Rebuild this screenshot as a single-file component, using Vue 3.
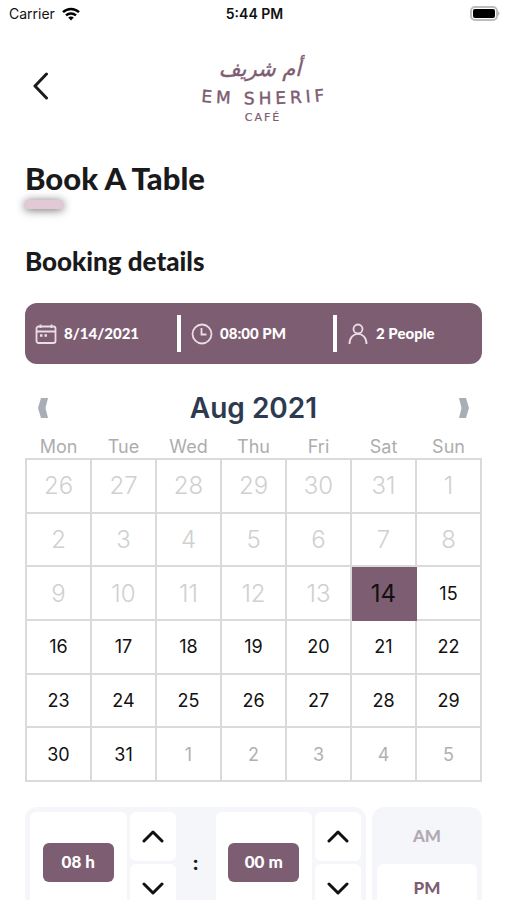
<script setup>
import { ref, computed } from 'vue'

const weekdays = ['Mon', 'Tue', 'Wed', 'Thu', 'Fri', 'Sat', 'Sun']
const hour = ref(8)
const minute = ref(0)
const period = ref('PM')
const selected = ref(14)

const cells = [
  ...[26, 27, 28, 29, 30, 31].map((n) => ({ n, kind: 'past' })),
  ...Array.from({ length: 31 }, (_, i) => ({ n: i + 1, kind: i < 13 ? 'past' : 'open' })),
  ...[1, 2, 3, 4, 5].map((n) => ({ n, kind: 'next' })),
]
const weeks = Array.from({ length: 6 }, (_, i) => cells.slice(i * 7, i * 7 + 7))

const pad = (n) => String(n).padStart(2, '0')
const timeLabel = computed(() => `${pad(hour.value)}:${pad(minute.value)} ${period.value}`)

function stepHour(d) {
  hour.value = ((hour.value - 1 + d + 12) % 12) + 1
}
function stepMinute(d) {
  minute.value = (minute.value + d * 15 + 60) % 60
}
</script>

<template>
  <div class="screen">
    <div class="status">
      <div class="carrier">
        <span>Carrier</span>
        <svg width="18" height="14" viewBox="0 0 18 14" fill="none" stroke="#000" stroke-width="2.4">
          <path d="M1 5.2C5.5 .9 12.500 .9 17 5.200" />
          <path d="M4 8.400C6.800 5.800 11.200 5.800 14 8.400" />
          <path d="M6.200 10.600C7.800 9.200 10.200 9.200 11.800 10.600L9 13.600Z" fill="#000" stroke="none" />
        </svg>
      </div>
      <span class="clock">5:44 PM</span>
      <svg class="battery" width="31" height="15" viewBox="0 0 31 15">
        <rect x="2" y="1" width="26" height="13" rx="4" fill="#fff" stroke="#bdbdbd" stroke-width="2" />
        <rect x="4" y="3" width="22" height="9" rx="2" fill="#000" />
        <path d="M29 5Q32 7.500 29 10Z" fill="#bdbdbd" />
      </svg>
    </div>

    <header class="top">
      <button class="back" aria-label="Back">
        <svg width="16" height="30" viewBox="0 0 16 30" fill="none" stroke="#1c1c1e" stroke-width="3" stroke-linecap="round" stroke-linejoin="round">
          <path d="M13.500 3L2 15L13.500 27" />
        </svg>
      </button>
      <svg class="logo" width="138" height="80" viewBox="0 0 138 80" fill="#7d5c70">
        <defs><path id="logo-arc" d="M0 55Q72 62 144 54" /></defs>
        <text class="logo-ar" x="70" y="30" text-anchor="middle" direction="rtl">أم شريف</text>
        <text class="logo-en" text-anchor="middle"><textPath href="#logo-arc" startOffset="52%">EM SHERIF</textPath></text>
        <text class="logo-sub" x="73" y="75" text-anchor="middle">CAFÉ</text>
      </svg>
    </header>

    <main class="content">
      <h1>Book A Table</h1>
      <div class="accent"></div>
      <h2>Booking details</h2>

      <div class="summary">
        <div class="item">
          <svg width="22" height="22" viewBox="0 0 22 22" fill="none" stroke="#eadde5" stroke-width="1.8">
            <rect x="1.500" y="3.500" width="19" height="16.500" rx="2" />
            <path d="M1.500 8.500H20.500M5.500 1.500V5M16.500 1.500V5" />
            <path d="M5 12.500h2.500M9.500 12.500h2.500" stroke-width="2.400" />
          </svg>
          <span>8/{{ selected }}/2021</span>
        </div>
        <div class="item">
          <svg width="22" height="22" viewBox="0 0 22 22" fill="none" stroke="#eadde5" stroke-width="1.8">
            <circle cx="11" cy="11" r="9.500" />
            <path d="M10.500 5V11.500H15.500" />
          </svg>
          <span>{{ timeLabel }}</span>
        </div>
        <div class="item">
          <svg width="22" height="22" viewBox="0 0 22 22" fill="none" stroke="#eadde5" stroke-width="1.8">
            <circle cx="11" cy="6" r="4.500" />
            <path d="M2.500 21C2.500 7.500 19.500 7.500 19.500 21" />
          </svg>
          <span>2 People</span>
        </div>
      </div>

      <section class="calendar">
        <div class="month">
          <button aria-label="Previous month">
            <svg width="12" height="22" viewBox="0 0 12 22"><path d="M4 1H11L8.500 11L11 21H4L1 11Z" fill="#a9adb6" /></svg>
          </button>
          <span>Aug 2021</span>
          <button aria-label="Next month">
            <svg width="12" height="22" viewBox="0 0 12 22"><path d="M8 1H1L3.500 11L1 21H8L11 11Z" fill="#a9adb6" /></svg>
          </button>
        </div>
        <table>
          <thead>
            <tr><th v-for="d in weekdays" :key="d" scope="col">{{ d }}</th></tr>
          </thead>
          <tbody>
            <tr v-for="(week, w) in weeks" :key="w">
              <td v-for="(c, i) in week" :key="i" :class="[c.kind, { selected: c.kind === 'open' && c.n === selected }]">
                <button :disabled="c.kind !== 'open'" @click="selected = c.n">{{ c.n }}</button>
              </td>
            </tr>
          </tbody>
        </table>
      </section>

      <section class="picker">
        <div class="time">
          <div class="value"><span>{{ pad(hour) }} h</span></div>
          <div class="steps">
            <button aria-label="Hour up" @click="stepHour(1)">
              <svg width="24" height="14" viewBox="0 0 24 14"><path d="M3 11L12 2L21 11" /></svg>
            </button>
            <button aria-label="Hour down" @click="stepHour(-1)">
              <svg width="24" height="14" viewBox="0 0 24 14"><path d="M3 2L12 11L21 2" /></svg>
            </button>
          </div>
          <span class="colon">:</span>
          <div class="value"><span>{{ pad(minute) }} m</span></div>
          <div class="steps">
            <button aria-label="Minute up" @click="stepMinute(1)">
              <svg width="24" height="14" viewBox="0 0 24 14"><path d="M3 11L12 2L21 11" /></svg>
            </button>
            <button aria-label="Minute down" @click="stepMinute(-1)">
              <svg width="24" height="14" viewBox="0 0 24 14"><path d="M3 2L12 11L21 2" /></svg>
            </button>
          </div>
        </div>
        <div class="period">
          <button v-for="p in ['AM', 'PM']" :key="p" :class="{ on: period === p }" @click="period = p">{{ p }}</button>
        </div>
      </section>
    </main>
  </div>
</template>

<style>
body {
  background: #fff;
}
</style>

<style scoped>
.screen {
  height: 100vh;
  overflow: hidden;
  font-family: Inter, sans-serif;
  color: #1a1a1c;
}
button {
  border: 0;
  padding: 0;
  margin: 0;
  background: none;
  font: inherit;
  color: inherit;
}
svg {
  display: block;
}
.status {
  display: grid;
  grid-template-columns: 1fr auto 1fr;
  align-items: center;
  height: 27px;
  padding: 0 7px 0 9px;
  font-size: 14px;
  color: #111;
}
.carrier {
  display: flex;
  align-items: center;
  gap: 7px;
}
.clock {
  font-weight: 600;
}
.battery {
  justify-self: end;
}
.top {
  display: grid;
  grid-template-columns: 1fr auto 1fr;
  align-items: center;
  height: 117px;
  padding: 0 22px 0 33px;
}
.back {
  justify-self: start;
}
.logo {
  overflow: visible;
}
.logo-ar {
  font: italic 21px "DejaVu Sans", sans-serif;
  stroke: #7d5c70;
  stroke-width: 0.4px;
}
.logo-en {
  font: 17px "DejaVu Sans", sans-serif;
  letter-spacing: 4px;
  stroke: #7d5c70;
  stroke-width: 0.4px;
}
.logo-sub {
  font: 11px "DejaVu Sans", sans-serif;
  letter-spacing: 2px;
  stroke: #7d5c70;
  stroke-width: 0.2px;
}
.content {
  padding: 16px 25px 0;
}
h1,
h2 {
  margin: 0;
  font-family: Lato, sans-serif;
  font-weight: 900;
}
h1 {
  font-size: 31px;
  line-height: 36px;
}
.accent {
  width: 38px;
  height: 9px;
  margin-top: 4px;
  border-radius: 2px;
  background: #e3c8d6;
  box-shadow: 0 1px 10px rgba(0, 0, 0, 0.6);
}
h2 {
  margin-top: 36px;
  font-size: 26px;
  line-height: 32px;
}
.summary {
  display: grid;
  grid-template-columns: 14fr 14fr 13fr;
  align-items: center;
  height: 61px;
  margin-top: 26px;
  border-radius: 12px;
  background: #7d5d71;
  color: #fff;
  font: 900 15px Lato, sans-serif;
}
.item {
  display: flex;
  align-items: center;
  gap: 7px;
  height: 37px;
  padding-left: 10px;
  border-right: 4px solid #fff;
}
.item span {
  padding-bottom: 2px;
}
.item:last-child {
  border-right: 0;
}
.month {
  display: flex;
  align-items: center;
  justify-content: space-between;
  height: 36px;
  margin-top: 26px;
  padding: 0 12px;
  font-size: 28px;
  font-weight: 600;
  color: #2d3a50;
}
table {
  width: 100%;
  height: 348px;
  margin-top: 8px;
  border-collapse: collapse;
  table-layout: fixed;
}
th {
  height: 22px;
  padding: 2px 0 0;
  font-size: 18px;
  font-weight: 400;
  line-height: 22px;
  color: #adadad;
}
td {
  padding: 0;
  border: 2px solid #dadada;
  text-align: center;
  font-size: 18px;
  color: #111;
}
td button {
  width: 100%;
  height: 51px;
}
.past {
  font-size: 24px;
  font-weight: 300;
  color: #d0d0d0;
}
.next {
  color: #b0b0b0;
}
.selected {
  font-size: 24px;
  background: #7d5d71;
  border-color: #7d5d71;
}
.picker {
  display: flex;
  gap: 6px;
  margin-top: 25px;
}
.time {
  flex: 1;
  display: flex;
  gap: 3px;
  padding: 5px;
  border-radius: 12px;
  background: #f4f6fa;
}
.value {
  flex: 1;
  display: grid;
  place-items: center;
  border-radius: 6px;
  background: #fff;
}
.value span {
  width: 71px;
  height: 39px;
  border-radius: 6px;
  background: #7d5d71;
  color: #fff;
  font: 900 17px/37px Lato, sans-serif;
  text-align: center;
}
.steps {
  display: grid;
  gap: 3px;
  width: 46px;
}
.steps button {
  display: grid;
  place-items: center;
  height: 49px;
  border-radius: 6px;
  background: #fff;
}
.steps path {
  fill: none;
  stroke: #111;
  stroke-width: 3;
  stroke-linecap: round;
  stroke-linejoin: round;
}
.colon {
  align-self: center;
  width: 34px;
  text-align: center;
  font-size: 20px;
  font-weight: 700;
}
.period {
  display: grid;
  gap: 3px;
  width: 100px;
  padding: 5px;
  border-radius: 12px;
  background: #f4f6fa;
}
.period button {
  height: 49px;
  padding-bottom: 2px;
  border-radius: 6px;
  font: 900 17px Lato, sans-serif;
  color: #b3a9b3;
}
.period .on {
  background: #fff;
  color: #7d5d71;
}
</style>
